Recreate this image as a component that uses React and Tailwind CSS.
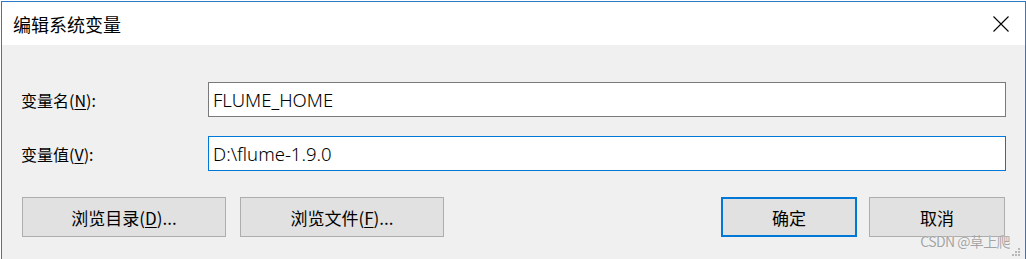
import { useState } from 'react';

const cjk = { fontFamily: '"Noto Sans CJK SC", "Noto Sans", sans-serif' };
const latin = { fontFamily: '"Noto Sans", "Noto Sans CJK SC", sans-serif' };

function Field({ label, hotkey, value, focused, onChange }) {
  return (
    <div className="flex items-center h-[35px]">
      <label className="w-[187px] text-[16px] text-black leading-none" style={cjk}>
        {label}(<u className="underline-offset-2">{hotkey}</u>):
      </label>
      <input
        value={value}
        onChange={onChange}
        className={
          'w-[798px] h-[35px] bg-white px-[4px] text-[18.5px] font-light text-black outline-none ' +
          (focused ? 'border border-[#0078d7]' : 'border border-[#7a7a7a]')
        }
        style={latin}
      />
    </div>
  );
}

function Btn({ children, width, primary }) {
  return (
    <button
      type="button"
      className={
        'h-[40px] bg-[#e1e1e1] text-[17px] text-black leading-none flex items-center justify-center ' +
        width +
        (primary ? ' border-2 border-[#0078d7]' : ' border border-[#adadad]')
      }
      style={cjk}
    >
      {children}
    </button>
  );
}

export default function App() {
  const [name, setName] = useState('FLUME_HOME');
  const [val, setVal] = useState('D:\\flume-1.9.0');

  return (
    <div className="w-[1026px] h-[259px] bg-white pt-[1px] overflow-hidden">
      <div className="relative ml-[1px] w-[1025px] h-[258px] border-t border-l border-r border-[#2b7bcb] flex flex-col">
        {/* title bar */}
        <div className="h-[43px] bg-white flex items-center justify-between pl-[11px] pr-[16px]">
          <span className="text-[18px] text-black leading-none" style={cjk}>编辑系统变量</span>
          <svg width="16" height="16" viewBox="0 0 16 16" className="mt-[1px]">
            <path d="M0.5 0.5 L15.5 15.5 M15.5 0.5 L0.5 15.5" stroke="#000" strokeWidth="1.1" />
          </svg>
        </div>

        {/* body */}
        <div className="flex-1 bg-[#f0f0f0] pt-[37px] pl-[19px] pr-[19px]">
          <div className="flex flex-col gap-[19px]">
            <Field label="变量名" hotkey="N" value={name} onChange={(e) => setName(e.target.value)} />
            <Field label="变量值" hotkey="V" value={val} focused onChange={(e) => setVal(e.target.value)} />
          </div>

          <div className="mt-[26px] flex items-center pl-[1px]">
            <div className="flex gap-[14px]">
              <Btn width="w-[204px]">
                浏览目录(<u className="underline-offset-2">D</u>)...
              </Btn>
              <Btn width="w-[204px]">
                浏览文件(<u className="underline-offset-2">F</u>)...
              </Btn>
            </div>
            <div className="ml-auto flex gap-[12px] pr-[1px]">
              <Btn width="w-[136px]" primary>确定</Btn>
              <Btn width="w-[136px]">取消</Btn>
            </div>
          </div>
        </div>

        {/* watermark */}
        <span
          className="absolute right-[15px] bottom-[11px] text-[14px] tracking-[-0.6px] text-[#a3a3a3] leading-none"
          style={{ ...cjk, textShadow: '0 0 1px #fff' }}
        >
          CSDN @草上爬
        </span>

        {/* resize grip */}
        <svg width="10" height="10" viewBox="0 0 10 10" className="absolute right-[4px] bottom-[1px]">
          <rect x="7" y="0" width="2" height="2" fill="#b8b8b8" />
          <rect x="4" y="3" width="2" height="2" fill="#b8b8b8" />
          <rect x="7" y="3" width="2" height="2" fill="#b8b8b8" />
          <rect x="1" y="6" width="2" height="2" fill="#b8b8b8" />
          <rect x="4" y="6" width="2" height="2" fill="#b8b8b8" />
          <rect x="7" y="6" width="2" height="2" fill="#b8b8b8" />
        </svg>
      </div>
    </div>
  );
}
